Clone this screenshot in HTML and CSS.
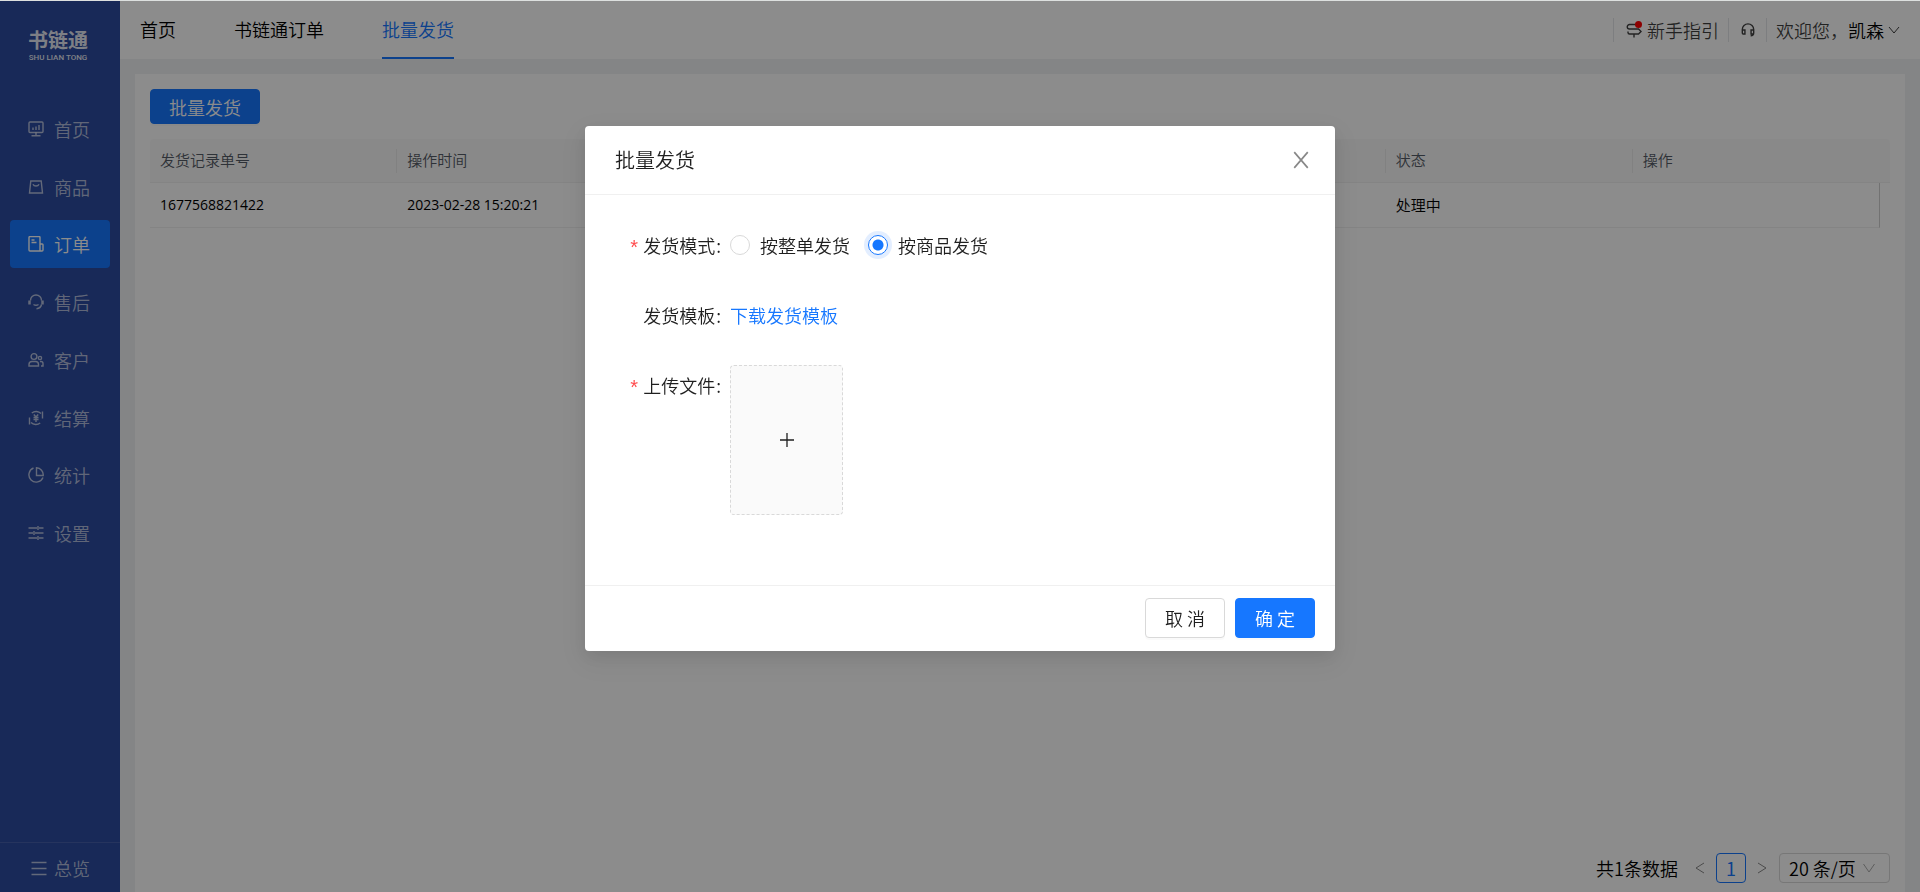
FILE: index.html
```html
<!DOCTYPE html>
<html lang="zh-CN">
<head>
<meta charset="utf-8">
<title>批量发货</title>
<link rel="stylesheet" href="styles.css">
</head>
<body>
<div class="app">
  <aside class="sidebar">
    <div class="logo">
      <span class="logo-name">书链通</span>
      <span class="logo-sub">SHU LIAN TONG</span>
    </div>
    <nav class="menu">
      <a class="menu-item" href="#"><svg class="icon" viewBox="0 0 16 16"><rect x="1" y="1" width="14" height="10.5" rx="1"/><path d="M5 9V6.500M8 9V5.500M11 9V4M8 11.500V14.500M3.500 14.800h9"/></svg>首页</a>
      <a class="menu-item" href="#"><svg class="icon" viewBox="0 0 16 16"><path d="M2.800 2h10.400l1.300 12H1.500zM5 5.200c1 2.400 5 2.400 6 0"/></svg>商品</a>
      <a class="menu-item active" href="#"><svg class="icon" viewBox="0 0 16 16"><path d="M12 15H2a1 1 0 0 1-1-1V1.500A1 1 0 0 1 2 .5h9a1 1 0 0 1 1 1zM12 8h2.200a.8.8 0 0 1 .8.8V14a1 1 0 0 1-1 1h-2M3.500 4h3M3.500 6.500h5"/></svg>订单</a>
      <a class="menu-item" href="#"><svg class="icon" viewBox="0 0 16 16"><path d="M2.500 6.500a5.500 5.500 0 0 1 11 0M13.500 10.500c-.5 2.500-2.300 4-5 4.200M5.500 10.500c1.500 1 3.500 1 5 0"/><path class="bold" d="M1.500 6.500v4M14.500 6.500v4"/></svg>售后</a>
      <a class="menu-item" href="#"><svg class="icon" viewBox="0 0 16 16"><circle cx="6" cy="4.500" r="2.900"/><circle cx="12" cy="6" r="1.600"/><path d="M1 14v-1.500c0-2 1-3 3-3h3.500c2 0 3 1 3 3V14zM12 9.500h1c1.300 0 2 .8 2 2V14h-2"/></svg>客户</a>
      <a class="menu-item" href="#"><svg class="icon" viewBox="0 0 16 16"><path d="M3.800 3A6.800 6.800 0 0 1 13 3.500M12.200 13A6.800 6.800 0 0 1 3 12.500M1.500 14.500V7.500M14.500 1.500v7M5.800 4.500 8 7l2.200-2.500M8 7v5M5.500 7.500h5M5.500 9.500h5"/></svg>结算</a>
      <a class="menu-item" href="#"><svg class="icon" viewBox="0 0 16 16"><path d="M5.500 1A7.300 7.300 0 1 0 15 10.500M8.500.8V8.500H15.200A7 7 0 0 0 8.500.8z"/></svg>统计</a>
      <a class="menu-item" href="#"><svg class="icon" viewBox="0 0 16 16"><path d="M.5 3h8.500M11 3h4.500M10 1v4M.5 8H5M7 8h8.500M6 6v4M.5 13h8.500M11 13h4.500M10 11v4"/></svg>设置</a>
    </nav>
    <a class="overview" href="#"><svg class="icon" viewBox="0 0 16 16"><path d="M.5 2.500h15M.5 8.500h15M.5 14.500h15"/></svg>总览</a>
  </aside>

  <div class="main">
    <header class="topbar">
      <nav class="tabs">
        <a class="tab" href="#">首页</a>
        <a class="tab" href="#">书链通订单</a>
        <a class="tab current" href="#">批量发货</a>
      </nav>
      <div class="tools">
        <a class="tool guide" href="#"><span class="guide-icon"><svg class="icon" viewBox="0 0 16 16"><path d="M10 2.500H3.500a2 2 0 0 0 0 4.500h9L15 9.500 12.500 12H3.500a1.500 1.500 0 0 1-1.500-1.500V9.500M8 12v3.500"/></svg><span class="dot"></span></span>新手指引</a>
        <button class="tool support" type="button" aria-label="客服"><svg class="icon" viewBox="0 0 16 16"><path d="M1.500 8.500V7.500a6.500 6.500 0 0 1 13 0v4c0 2-1 3-3.500 3.200M1.500 8h3v4.500h-2a1 1 0 0 1-1-1zM14.500 8h-3v4.500h2a1 1 0 0 0 1-1z"/></svg></button>
        <button class="tool user" type="button"><span>欢迎您，</span><span class="user-name">凯森</span><svg class="chevron" viewBox="0 0 12 12"><path d="M1 3l5 6 5-6"/></svg></button>
      </div>
    </header>

    <main class="card">
      <div><button class="btn primary toolbar-btn" type="button">批量发货</button></div>
      <div class="table-box">
        <table class="records">
          <thead>
            <tr><th><span>发货记录单号</span></th><th><span>操作时间</span></th><th><span></span></th><th><span></span></th><th><span></span></th><th><span>状态</span></th><th><span>操作</span></th></tr>
          </thead>
          <tbody>
            <tr><td>1677568821422</td><td>2023-02-28 15:20:21</td><td></td><td></td><td></td><td class="state">处理中</td><td></td></tr>
          </tbody>
        </table>
      </div>
      <footer class="pager">
        <span class="total">共1条数据</span>
        <button class="arrow" type="button" aria-label="上一页"><svg class="chevron" viewBox="0 0 12 12"><path d="M10 1L2 6l8 5"/></svg></button>
        <button class="page" type="button">1</button>
        <button class="arrow" type="button" aria-label="下一页"><svg class="chevron" viewBox="0 0 12 12"><path d="M2 1l8 5-8 5"/></svg></button>
        <span class="size"><select aria-label="每页条数"><option>20 条/页</option></select><svg class="chevron" viewBox="0 0 12 12"><path d="M.5 2l5.500 8 5.500-8"/></svg></span>
      </footer>
    </main>
  </div>
</div>

<div class="mask">
  <form class="modal" role="dialog" aria-labelledby="dialog-title">
    <div class="modal-head">
      <h1 id="dialog-title">批量发货</h1>
      <button class="close" type="button" aria-label="关闭"><svg viewBox="0 0 16 16"><path d="M2 1l12 14M14 1L2 15"/></svg></button>
    </div>
    <div class="modal-body">
      <div class="field" role="radiogroup" aria-labelledby="mode-label">
        <span class="label required" id="mode-label">发货模式</span>
        <div class="radios">
          <label class="radio"><input type="radio" name="mode">按整单发货</label>
          <label class="radio"><input type="radio" name="mode" checked>按商品发货</label>
        </div>
      </div>
      <div class="field">
        <span class="label">发货模板</span>
        <a class="download" href="#">下载发货模板</a>
      </div>
      <div class="field">
        <span class="label required" id="upload-label">上传文件</span>
        <button class="upload" type="button" aria-labelledby="upload-label"><svg viewBox="0 0 16 16"><path d="M8 1v14M1 8h14"/></svg></button>
      </div>
    </div>
    <div class="modal-foot">
      <button class="btn" type="button">取 消</button>
      <button class="btn primary" type="submit">确 定</button>
    </div>
  </form>
</div>
</body>
</html>
```
FILE: styles.css
```css
* { box-sizing: border-box; }

body {
  margin: 0;
  font: 350 18px/28px "Noto Sans CJK SC", sans-serif;
  color: #000;
}

a { color: inherit; text-decoration: none; }
button, select { font: inherit; color: inherit; cursor: pointer; }
svg { fill: none; stroke: currentColor; flex: none; }

.app {
  display: flex;
  min-height: 100vh;
  border-top: 1px solid #dde0df;
  background: #f0f2f5;
}

.icon { width: 16px; height: 16px; stroke-width: 1.400; }
.icon .bold { stroke-width: 2.500; }
.chevron { width: 12px; height: 12px; }

/* Sidebar */
.sidebar {
  display: flex;
  flex-direction: column;
  flex: none;
  width: 120px;
  background: #2c4ba0;
  color: rgba(255, 255, 255, .65);
}
.logo {
  display: flex;
  flex-direction: column;
  align-items: center;
  padding: 27px 4px 0 0;
  height: 104px;
  color: rgba(255, 255, 255, .9);
}
.logo-name { font-size: 20px; font-weight: 700; line-height: 24px; }
.logo-sub { font: 500 8px/12px Roboto, sans-serif; }
.menu {
  display: flex;
  flex-direction: column;
  justify-content: space-between;
  min-height: 452px;
  padding: 0 10px;
}
.menu-item {
  display: flex;
  align-items: center;
  gap: 10px;
  height: 48px;
  padding-left: 18px;
  border-radius: 4px;
}
.menu-item.active { background: #1677ff; color: #fff; }
.overview {
  display: flex;
  align-items: center;
  gap: 7px;
  height: 50px;
  margin-top: auto;
  padding-left: 31px;
  border-top: 1px solid rgba(255, 255, 255, .12);
}

/* Top bar */
.main {
  display: flex;
  flex-direction: column;
  flex: 1;
  min-width: 0;
}
.topbar {
  display: flex;
  justify-content: space-between;
  height: 58px;
  padding: 0 20px;
  background: #fff;
}
.tabs { display: flex; gap: 58px; }
.tab { line-height: 56px; border-bottom: 2px solid transparent; }
.tab.current { color: #1677ff; border-color: #1677ff; }
.tools { display: flex; align-items: center; color: rgba(0, 0, 0, .75); }
.tool {
  display: flex;
  align-items: center;
  height: 24px;
  padding: 0 12px;
  border: 0;
  border-left: 1px solid #e4e6ea;
  background: none;
}
.guide { gap: 5px; padding-right: 9px; }
.support { padding-right: 11px; }
.support .icon { width: 14px; height: 14px; stroke-width: 1.600; }
.guide-icon { position: relative; display: flex; }
.dot {
  position: absolute;
  top: -1px;
  right: 0;
  width: 7px;
  height: 7px;
  border-radius: 50%;
  background: #f00;
}
.user { padding: 0 0 0 9px; }
.user-name { color: #000; margin-right: 4px; }

/* Content */
.card {
  display: flex;
  flex-direction: column;
  flex: 1;
  margin: 15px 15px 0;
  padding: 15px 15px 9px;
  background: #fff;
}
.btn {
  height: 40px;
  min-width: 80px;
  padding: 0 15px;
  border: 1px solid #d9d9d9;
  border-radius: 4px;
  background: #fff;
  box-shadow: 0 2px 0 rgba(0, 0, 0, .02);
}
.btn.primary { border-color: #1677ff; background: #1677ff; color: #fff; }
.btn.toolbar-btn { display: block; height: 35px; padding: 0 18px; line-height: 30px; }
.table-box {
  margin-top: 15px;
  padding-right: 10px;
  border-radius: 4px;
  background: linear-gradient(#fafafa 43px, #f0f0f0 43px, #f0f0f0 44px, transparent 44px);
}
.records {
  width: 100%;
  table-layout: fixed;
  border-collapse: separate;
  border-spacing: 0;
  font-size: 15px;
  text-align: left;
}
.records th {
  height: 44px;
  padding: 0;
  font-weight: 350;
  line-height: 22px;
  color: #555b66;
}
.records th span {
  display: block;
  height: 24px;
  padding-left: 10px;
  border-right: 1px solid #ececec;
}
.records th:last-child span { border-right: 0; }
.records td {
  height: 45px;
  padding: 0 10px;
  border-bottom: 1px solid #f0f0f0;
  font-family: "Open Sans", "Noto Sans CJK SC", sans-serif;
  font-size: 14px;
  font-weight: 400;
}
.records .state {
  font-family: "Noto Sans CJK SC", sans-serif;
  font-size: 15px;
  font-weight: 350;
}
.records td:last-child { border-right: 1px solid #d0d0d0; }

.pager {
  display: flex;
  align-items: center;
  justify-content: flex-end;
  margin-top: auto;
}
.total { margin-right: 6px; }
.arrow {
  display: grid;
  place-items: center;
  width: 32px;
  height: 30px;
  padding: 0;
  border: 0;
  background: none;
  color: #888;
}
.arrow .chevron { width: 12px; height: 14px; }
.page {
  width: 30px;
  height: 30px;
  padding: 0;
  border: 1px solid #1677ff;
  border-radius: 4px;
  background: #fff;
  color: #1677ff;
  font-weight: 400;
  line-height: 28px;
}
.size { display: grid; align-items: center; margin-left: 1px; }
.size > * { grid-area: 1 / 1; }
.size select {
  appearance: none;
  width: 111px;
  height: 30px;
  padding: 0 9px;
  border: 1px solid #d9d9d9;
  border-radius: 4px;
  background: #fff;
  line-height: 26px;
}
.size .chevron {
  justify-self: end;
  margin-right: 15px;
  color: #aaa;
  pointer-events: none;
}

/* Dialog */
.mask {
  position: fixed;
  inset: 1px 0 0;
  display: flex;
  align-items: flex-start;
  justify-content: center;
  padding-top: 125px;
  background: rgba(0, 0, 0, .45);
}
.modal {
  width: 750px;
  border-radius: 4px;
  background: #fff;
  color: rgba(0, 0, 0, .88);
  box-shadow: 0 6px 16px rgba(0, 0, 0, .08), 0 9px 28px 8px rgba(0, 0, 0, .05);
}
.modal-head {
  display: flex;
  align-items: center;
  justify-content: space-between;
  padding: 20px 25px 20px 30px;
  border-bottom: 1px solid #f0f0f0;
}
.modal-head h1 { margin: 0; font-size: 20px; font-weight: 350; line-height: 28px; }
.close {
  display: flex;
  padding: 0;
  border: 0;
  background: none;
  color: #888;
}
.close svg { width: 18px; height: 18px; stroke-width: 1.500; }
.modal-body {
  display: flex;
  flex-direction: column;
  gap: 30px;
  padding: 30px 45px 70px;
}
.field { display: flex; align-items: flex-start; line-height: 40px; }
.label {
  display: flex;
  justify-content: flex-end;
  flex: none;
  width: 100px;
  padding-right: 9px;
  white-space: nowrap;
}
.label::after { content: ":"; margin-left: 1px; }
.required::before {
  content: "*";
  margin-right: 5px;
  color: #ff4d4f;
  font-family: "Liberation Sans", sans-serif;
  font-size: 20px;
  line-height: 44px;
  height: 40px;
}
.radios { display: flex; gap: 18px; }
.radio { display: flex; align-items: center; gap: 10px; }
.radio input {
  appearance: none;
  width: 20px;
  height: 20px;
  margin: 0;
  border: 1px solid #d9d9d9;
  border-radius: 50%;
}
.radio input:checked {
  border-color: #1677ff;
  background: radial-gradient(circle, #1677ff 5px, #fff 6px);
  box-shadow: 0 0 0 4px rgba(22, 119, 255, .12);
}
.download { color: #1677ff; }
.upload {
  display: grid;
  place-items: center;
  width: 113px;
  height: 150px;
  border: 1px dashed #d9d9d9;
  border-radius: 4px;
  background: #fafafa;
}
.upload svg { width: 16px; height: 16px; stroke-width: 1.300; }
.modal-foot {
  display: flex;
  justify-content: flex-end;
  gap: 10px;
  padding: 12px 20px 13px;
  border-top: 1px solid #f0f0f0;
}
```
